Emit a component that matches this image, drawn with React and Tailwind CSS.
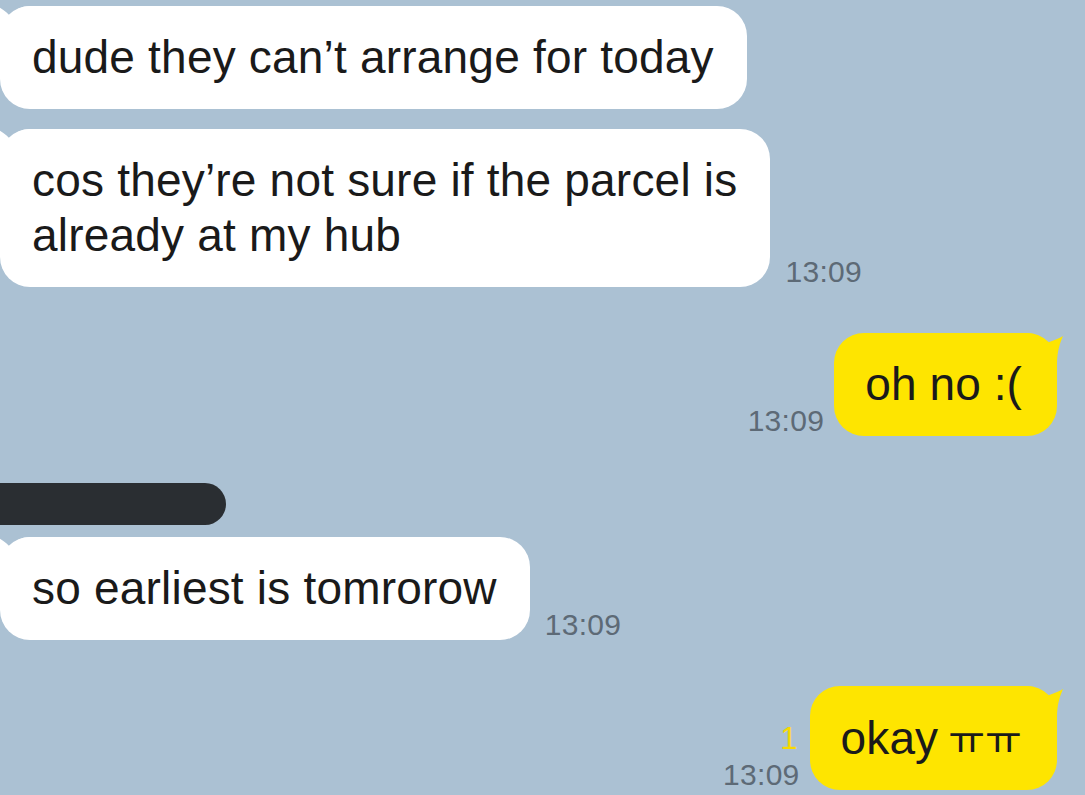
import React from "react";

const FONT = { fontFamily: '"Liberation Sans", Arial, sans-serif' };

function LeftTail() {
  return (
    <svg
      className="absolute left-0 top-0 overflow-visible"
      width="32"
      height="32"
      viewBox="0 0 32 32"
    >
      <path
        d="M-3 0 C3 3 8 7 11 11 C14 4 20 0 32 0 L32 32 L0 32 Z"
        fill="#ffffff"
      />
    </svg>
  );
}

function RightTail() {
  return (
    <svg
      className="absolute right-[-10px] top-0 overflow-visible"
      width="42"
      height="32"
      viewBox="-32 0 42 32"
    >
      <path
        d="M-32 0 C-22 0 -16 4 -13 11 C-6 8 2 6 6 3 C3 10 0 18 0 32 L-32 32 Z"
        fill="#fee500"
      />
    </svg>
  );
}

function Time({ children, className = "" }) {
  return (
    <div
      className={"text-[30px] leading-[30px] text-[#5d6a76] tracking-[0.3px] " + className}
      style={FONT}
    >
      {children}
    </div>
  );
}

function LeftBubble({ children, time }) {
  return (
    <div className="flex items-end">
      <div className="relative rounded-[30px] bg-white pl-8 pr-[33px] py-6 text-[46px] leading-[55px] text-[#1a1a1a] tracking-[0.2px] whitespace-nowrap">
        <LeftTail />
        <span className="relative">{children}</span>
      </div>
      {time && <Time className="ml-[15px]">{time}</Time>}
    </div>
  );
}

function RightBubble({ children, time, unread, padL = "pl-[31px]" }) {
  return (
    <div className="flex items-end justify-end pr-[28px]">
      <div className="mr-[10px] flex flex-col items-end">
        {unread && (
          <div className="text-[31px] leading-[34px] text-[#f7d900] mb-[4px] mr-[2px]" style={FONT}>
            {unread}
          </div>
        )}
        <Time>{time}</Time>
      </div>
      <div
        className={
          "relative rounded-[30px] bg-[#fee500] pr-[35px] py-6 text-[46px] leading-[55px] text-[#1a1a1a] tracking-[0.1px] whitespace-nowrap " +
          padL
        }
      >
        <RightTail />
        <span className="relative">{children}</span>
      </div>
    </div>
  );
}

export default function App() {
  return (
    <div
      className="w-[1085px] h-[795px] overflow-hidden bg-[#abc1d3] pt-[6px] flex flex-col"
      style={FONT}
    >
      <LeftBubble>dude they can’t arrange for today</LeftBubble>
      <div className="h-[20px]" />
      <LeftBubble time="13:09">
        cos they’re not sure if the parcel is
        <br />
        already at my hub
      </LeftBubble>
      <div className="h-[46px]" />
      <RightBubble time="13:09">oh no :(</RightBubble>
      <div className="h-[47px]" />
      <div className="ml-[-20px] h-[42px] w-[246px] rounded-full bg-[#2a2e32]" />
      <div className="h-[12px]" />
      <LeftBubble time="13:09">so earliest is tomrorow</LeftBubble>
      <div className="h-[46px]" />
      <RightBubble time="13:09" unread="1" padL="pl-[31px]">
        okay
        <span
          className="ml-[10px] text-[40px]"
          style={{ fontFamily: '"Noto Sans CJK KR", sans-serif' }}
        >
          ㅠㅠ
        </span>
      </RightBubble>
    </div>
  );
}
